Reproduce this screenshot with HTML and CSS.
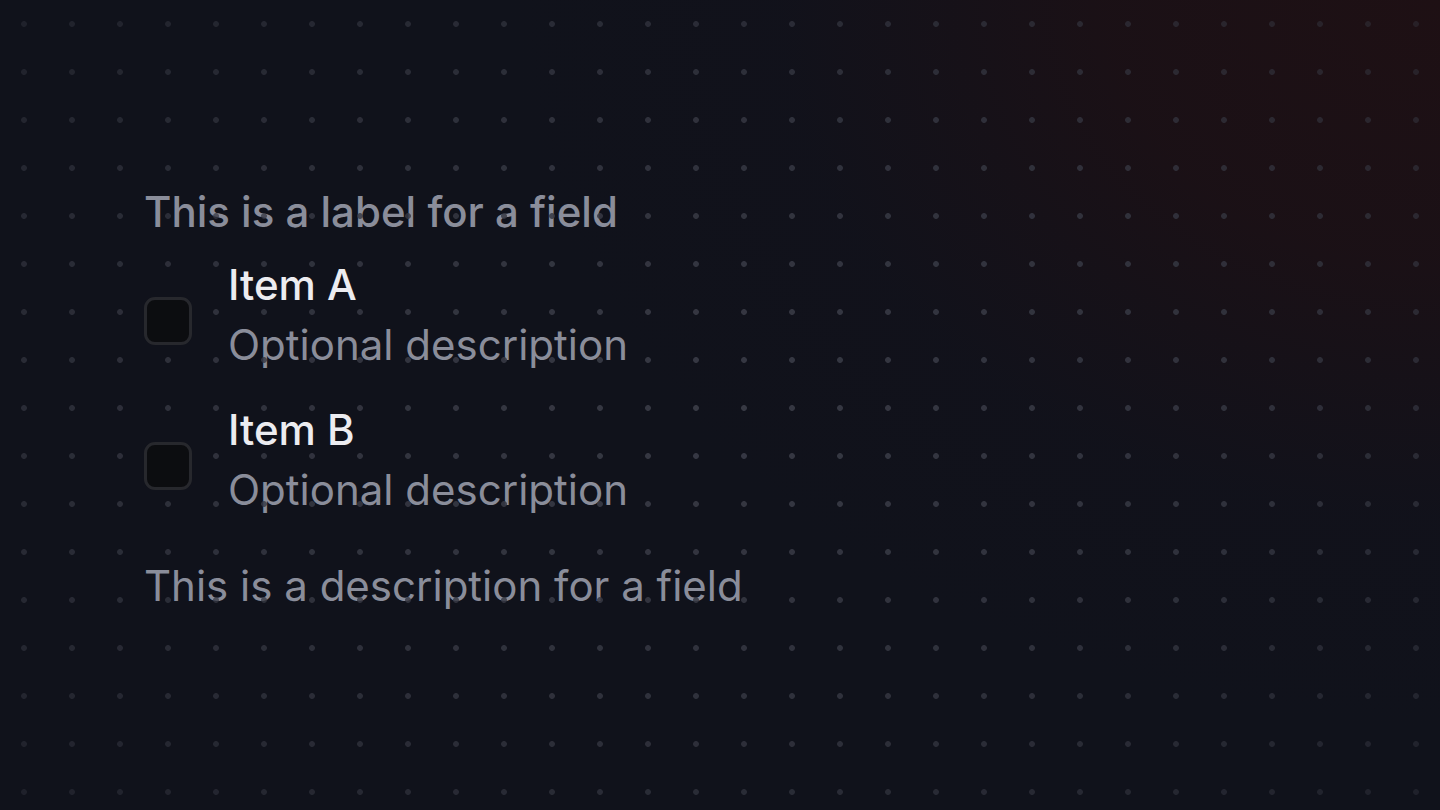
FILE: index.html
```html
<!DOCTYPE html>
<html lang="en">
<head>
<meta charset="utf-8">
<title>Checkbox group</title>
<link rel="stylesheet" href="styles.css">
</head>
<body>
  <main class="page">
    <fieldset class="field">
      <div class="field-label">This is a label for a field</div>
      <div class="options">
        <label class="option">
          <span class="checkbox"></span>
          <span class="option-text">
            <span class="option-title">Item A</span>
            <span class="option-desc">Optional description</span>
          </span>
        </label>
        <label class="option">
          <span class="checkbox"></span>
          <span class="option-text">
            <span class="option-title">Item B</span>
            <span class="option-desc">Optional description</span>
          </span>
        </label>
      </div>
      <div class="field-desc">This is a description for a field</div>
    </fieldset>
  </main>
  <div class="dots"></div>
</body>
</html>
```

FILE: styles.css
```css
* { box-sizing: border-box; }

html, body {
  margin: 0;
  height: 100%;
}

body {
  font-family: Inter, "Noto Sans", sans-serif;
  background:
    radial-gradient(ellipse 1100px 860px at 100% 0%, #1e1014 0%, rgba(30, 16, 20, 0.75) 30%, rgba(20, 17, 26, 0.3) 60%, rgba(16, 18, 27, 0) 85%),
    #10121b;
  overflow: hidden;
}

.page {
  padding: 182px 0 0 144px;
}

.field {
  margin: 0;
  padding: 0;
  border: 0;
  display: flex;
  flex-direction: column;
}

.field-label {
  font-size: 42px;
  line-height: 60px;
  font-weight: 500;
  color: #8a8d9a;
}

.options {
  display: flex;
  flex-direction: column;
  gap: 27px;
  margin-top: 15px;
}

.option {
  display: flex;
  align-items: flex-start;
  gap: 36px;
}

.checkbox {
  position: relative;
  z-index: 2;
  width: 48px;
  height: 48px;
  margin-top: 40px;
  border: 3px solid #27282d;
  border-radius: 11px;
  background: #0c0d10;
  flex: none;
}

.option-text {
  display: flex;
  flex-direction: column;
}

.option-title {
  font-size: 42px;
  line-height: 55px;
  font-weight: 500;
  color: #ececf0;
}

.option-desc {
  margin-top: 3px;
  font-size: 42px;
  line-height: 60px;
  font-weight: 400;
  color: #8a8d9a;
}

.field-desc {
  margin-top: 36px;
  font-size: 42px;
  line-height: 60px;
  font-weight: 400;
  color: #8a8d9a;
}

.dots {
  position: fixed;
  inset: 0;
  z-index: 1;
  pointer-events: none;
  background-image: radial-gradient(circle at center, #373944 0, #373944 2.5px, rgba(55, 57, 68, 0) 3.3px);
  background-size: 48px 48px;
  background-position: 0 0;
  -webkit-mask-image: radial-gradient(ellipse 75% 75% at 50% 50%, rgba(0,0,0,1) 0%, rgba(0,0,0,0.8) 50%, rgba(0,0,0,0.3) 100%);
  mask-image: radial-gradient(ellipse 75% 75% at 50% 50%, rgba(0,0,0,1) 0%, rgba(0,0,0,0.8) 50%, rgba(0,0,0,0.3) 100%);
}
```
